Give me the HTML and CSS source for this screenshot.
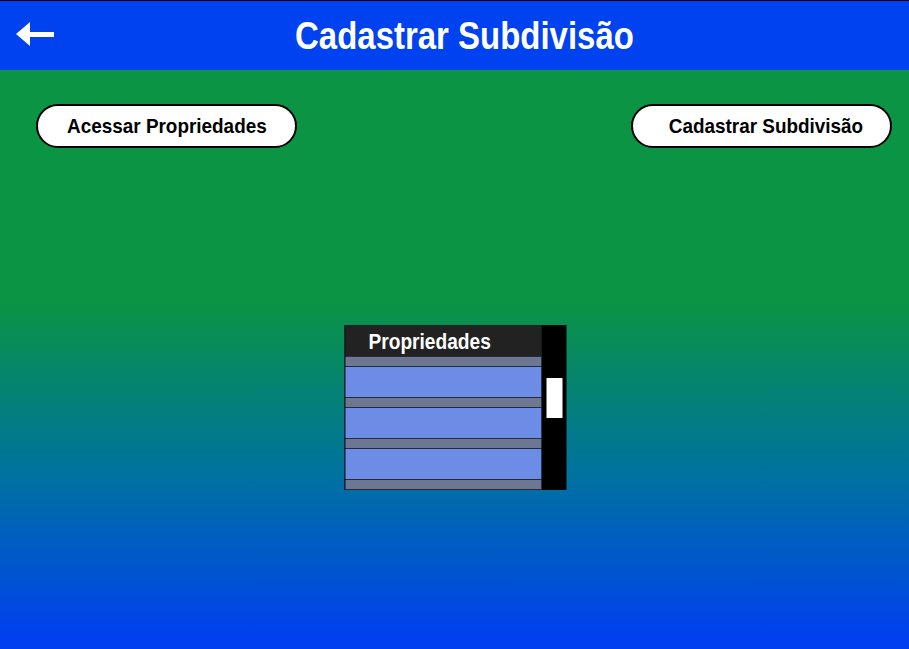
FILE: index.html
```html
<!DOCTYPE html>
<html lang="pt">
<head>
<meta charset="utf-8">
<title>Cadastrar Subdivisão</title>
<link rel="stylesheet" href="styles.css">
</head>
<body>
<header class="topbar">
  <button class="back" aria-label="Voltar">
    <svg width="40" height="26" viewBox="0 0 40 26"><path d="M0 12 L14 0 L14 10 L38 10 L38 15 L14 15 L14 24 Z" fill="#fff"/></svg>
  </button>
  <h1 class="title"><span class="narrow">Cadastrar Subdivisão</span></h1>
</header>
<main class="content">
  <div class="actions">
    <button class="pill"><span class="narrow">Acessar Propriedades</span></button>
    <button class="pill pill-right"><span class="narrow">Cadastrar Subdivisão</span></button>
  </div>
  <div class="list-wrap">
    <div class="list">
      <div class="list-col">
        <div class="list-head"><span class="narrow head-text">Propriedades</span></div>
        <div class="sep"></div>
        <div class="row"></div>
        <div class="sep"></div>
        <div class="row"></div>
        <div class="sep"></div>
        <div class="row"></div>
        <div class="sep"></div>
      </div>
      <div class="scroll"><div class="thumb"></div></div>
    </div>
  </div>
</main>
</body>
</html>
```
FILE: styles.css
```css
html, body {
  margin: 0;
  padding: 0;
  height: 100%;
}
body {
  font-family: "Liberation Sans", Arial, sans-serif;
  display: flex;
  flex-direction: column;
  min-height: 649px;
  overflow: hidden;
}
.narrow {
  display: inline-block;
  white-space: nowrap;
}
.topbar {
  position: relative;
  height: 69px;
  border-top: 1px solid #000;
  background: #0041f0;
  display: flex;
  align-items: center;
  justify-content: center;
}
.back {
  position: absolute;
  left: 16px;
  top: 21px;
  padding: 0;
  border: 0;
  background: none;
  line-height: 0;
}
.title {
  margin: 0;
  color: #fff;
  font-size: 39px;
  font-weight: bold;
  transform: translateX(10px);
}
.title .narrow {
  transform: scaleX(0.845);
}
.content {
  flex: 1;
  background: linear-gradient(to bottom, #0a9444 0%, #0a9444 40%, #0072a0 70%, #0040f0 98%);
  display: flex;
  flex-direction: column;
}
.actions {
  display: flex;
  justify-content: space-between;
  padding: 34px 17px 0 36px;
}
.pill {
  width: 261px;
  height: 44px;
  box-sizing: border-box;
  border: 2px solid #000;
  border-radius: 22px;
  background: #fff;
  color: #000;
  font-family: inherit;
  font-weight: bold;
  font-size: 21px;
  padding: 0;
}
.pill .narrow {
  transform: scaleX(0.9);
}
.pill-right {
  padding-left: 8px;
}
.list-wrap {
  display: flex;
  justify-content: center;
  padding-top: 177px;
}
.list {
  display: flex;
  width: 222px;
  transform: translateX(0.5px);
}
.list-col {
  width: 196px;
  border-left: 1px solid #000;
  background: #262c3e;
  display: flex;
  flex-direction: column;
  gap: 1px;
  padding-bottom: 1px;
}
.list-head {
  height: 31px;
  background: #222222;
  color: #fff;
  font-weight: bold;
  font-size: 22px;
  line-height: 33px;
  padding-left: 23px;
}
.head-text {
  transform: scaleX(0.87);
  transform-origin: left center;
}
.sep {
  height: 9px;
  background: #6e7792;
}
.row {
  height: 30px;
  background: #6d8ce6;
}
.scroll {
  width: 25px;
  background: #000;
  padding: 53px 0 0 5px;
  box-sizing: border-box;
}
.thumb {
  width: 16px;
  height: 40px;
  background: #fff;
}
```
